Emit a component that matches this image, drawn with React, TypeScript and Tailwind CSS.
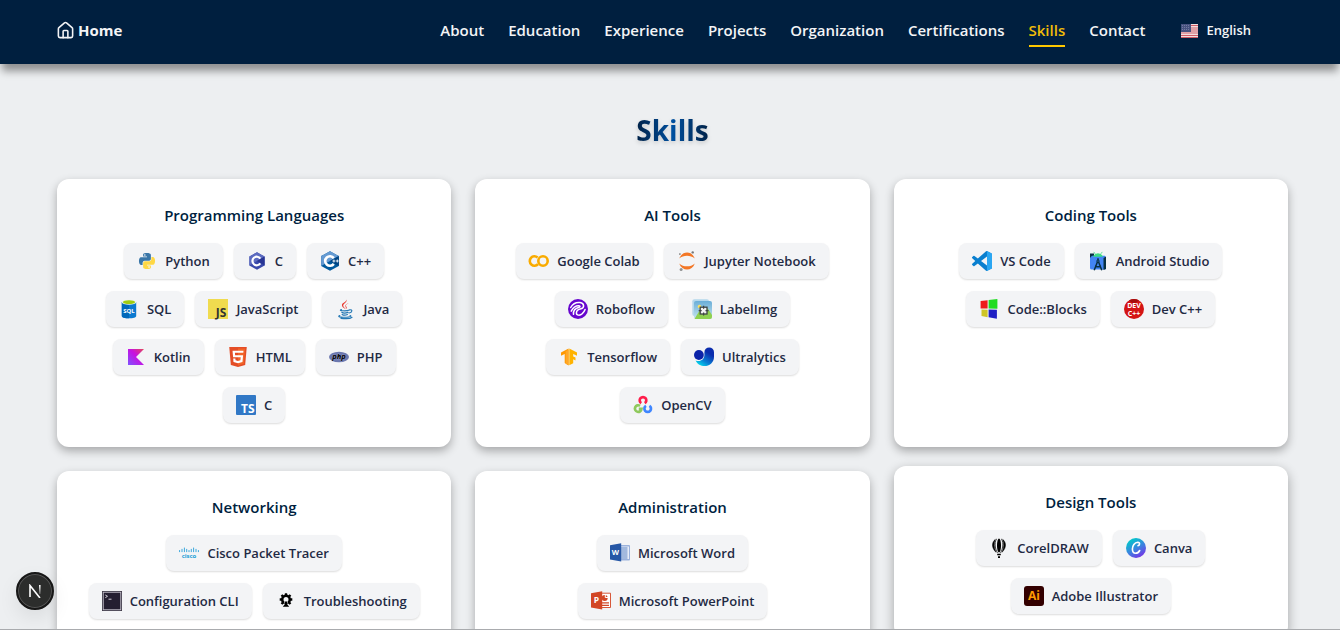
import type { ReactNode } from "react";
import { House } from "lucide-react";

type Skill = { name: string; icon: ReactNode };
type Category = { title: string; skills: Skill[]; lifted?: boolean };

function Icon({ box = "0 0 20 20", children }: { box?: string; children: ReactNode }) {
  return (
    <svg aria-hidden="true" viewBox={box} className="size-5 shrink-0 overflow-visible font-['Open_Sans',sans-serif]">
      {children}
    </svg>
  );
}

const python = (
  <Icon box="-3 -3 30 30">
    <path
      fill="#3a76a8"
      d="M14.25.18l.9.2.73.26.59.3.45.32.34.34.25.34.16.33.1.3.04.26.02.2-.01.13V8.5l-.05.63-.13.55-.21.46-.26.38-.3.31-.33.25-.35.19-.35.14-.33.1-.3.07-.26.04-.21.02H8.77l-.69.05-.59.14-.5.22-.41.27-.33.32-.27.35-.2.36-.15.37-.1.35-.07.32-.04.27-.02.21v3.06H3.17l-.21-.03-.28-.07-.32-.12-.35-.18-.36-.26-.36-.36-.35-.46-.32-.59-.28-.73-.21-.88-.14-1.05-.05-1.23.06-1.22.16-1.04.24-.87.32-.71.36-.57.4-.44.42-.33.42-.24.4-.16.36-.1.32-.05.24-.01h.16l.06.01h8.16v-.83H6.18l-.01-2.75-.02-.37.05-.34.11-.31.17-.28.25-.26.31-.23.38-.2.44-.18.51-.15.58-.12.64-.1.71-.06.77-.04.84-.02 1.27.05z"
    />
    <path
      fill="#ffd845"
      d="M21.04 6.11l.28.06.32.12.35.18.36.27.36.35.35.47.32.59.28.73.21.88.14 1.04.05 1.23-.06 1.23-.16 1.04-.24.86-.32.71-.36.57-.4.45-.42.33-.42.24-.4.16-.36.09-.32.05-.24.02-.16-.01h-8.22v.82h5.84l.01 2.76.02.36-.05.34-.11.31-.17.29-.25.25-.31.24-.38.2-.44.17-.51.15-.58.13-.64.09-.71.07-.77.04-.84.01-1.27-.04-1.07-.14-.9-.2-.73-.25-.59-.3-.45-.33-.34-.34-.25-.34-.16-.33-.1-.3-.04-.25-.02-.2.01-.13v-5.34l.05-.64.13-.54.21-.46.26-.38.3-.32.33-.24.35-.2.35-.14.33-.1.3-.06.26-.04.21-.02.13-.01h5.84l.69-.05.59-.14.5-.21.41-.28.33-.32.27-.35.2-.36.15-.36.1-.35.07-.32.04-.28.02-.21V6.07h2.09l.14.01z"
    />
    <circle cx="8.8" cy="3" r="1.2" fill="#fff" />
    <circle cx="15.1" cy="21" r="1.2" fill="#fff" />
  </Icon>
);

const cLang = (
  <Icon>
    <path d="M10 1.2 17.6 5.6v8.8L10 18.8 2.4 14.4V5.6z" fill="#3949ab" />
    <path d="M10 1.2 17.6 5.6 2.4 14.4V5.6z" fill="#5c6bc0" />
    <path d="M17.6 5.6v8.8L10 10z" fill="#283593" />
    <path d="M13.3 7.6a4.3 4.3 0 1 0 0 4.8" fill="none" stroke="#fff" strokeWidth="2.2" />
  </Icon>
);

const cpp = (
  <Icon>
    <path d="M10 .2 18.8 5.1v9.8L10 19.8 1.2 14.9V5.1z" fill="#00599c" />
    <path d="M10 .2 18.8 5.1 1.2 14.9V5.1z" fill="#659ad2" />
    <path d="M18.8 5.1v9.8L10 10z" fill="#004482" />
    <path d="M13.8 7.1a4.8 4.8 0 1 0 0 5.8" fill="none" stroke="#fff" strokeWidth="2.6" />
    <path d="M12.4 10h3M13.9 8.5v3M15.9 10h2.8M17.3 8.5v3" stroke="#fff" strokeWidth=".9" />
  </Icon>
);

const sql = (
  <Icon>
    <path d="M2.8 3v14c0 1.5 3.2 2.3 7.2 2.3s7.2-.8 7.2-2.3V3z" fill="#0a79d0" />
    <path d="M2.8 3v14c0 1.5 3.2 2.3 7.2 2.3V3z" fill="#0068ba" />
    <ellipse cx="10" cy="3.2" rx="7.2" ry="2.5" fill="#eef6e4" />
    <ellipse cx="10" cy="3.2" rx="6" ry="1.9" fill="#9fcc10" />
    <text x="10" y="13.6" textAnchor="middle" fontSize="6" fontWeight="700" fill="#fff">SQL</text>
  </Icon>
);

const javascript = (
  <Icon>
    <rect width="20" height="20" fill="#f0db4f" />
    <text x="18.4" y="17.6" textAnchor="end" fontSize="12" fontWeight="700" fill="#323330">JS</text>
  </Icon>
);

const java = (
  <Icon>
    <path d="M11.3.5c1.5 3-3.8 4.2-3 6.6.3 1 1.5 1.8 2.1 2.9-2.2-1.3-4-2.7-3.4-4.6C7.7 3.5 11.5 3 11.3.5z" fill="#e8382f" />
    <path d="M13.7 4c-2 1-4 2-3.2 3.7.5 1 1 1.6-.1 2.5 3-1.6.2-2.7.5-3.8.2-.9 1.5-1.5 2.8-2.4z" fill="#e8382f" />
    <g fill="none" stroke="#2579b5" strokeWidth="1.2" strokeLinecap="round">
      <path d="M6.4 10.6c-4 1.4 5.5 1.6 8 .4M14.8 10.8c3-.6 2.6 2.8-.7 3.2M6.8 13.3c1.2.9 4.4.8 6.2.1M7.2 15.4c1.2.8 3.8.7 5.2.1" />
      <path d="M4.8 16.6c-4 1.4 4.5 2 8.6 1.4 3-.4 2.8-1.1 1.7-1.5M6 19.3c4 .5 9.5.4 11-1" />
    </g>
  </Icon>
);

const kotlin = (
  <Icon>
    <defs>
      <linearGradient id="kotlin" x1="1" y1="0" x2="0" y2="1">
        <stop offset="0" stopColor="#e44857" />
        <stop offset=".45" stopColor="#c711e1" />
        <stop offset="1" stopColor="#7f52ff" />
      </linearGradient>
    </defs>
    <path d="M2 2h16l-8 8 8 8H2z" fill="url(#kotlin)" />
  </Icon>
);

const html = (
  <Icon box="0 0 24 24">
    <path d="M1.5 0h21l-1.91 21.563L11.977 24l-8.564-2.438L1.5 0z" fill="#e44d26" />
    <path d="M12 1.8h8.6L19 20.2l-7 2z" fill="#f16529" />
    <path
      fill="#fff"
      d="M8.531 9.75l-.232-2.718 10.059.003.23-2.622L5.412 4.41l.698 8.01h9.126l-.326 3.426-2.91.804-2.955-.81-.188-2.11H6.248l.33 4.171L12 19.351l5.379-1.443.744-8.157H8.531z"
    />
  </Icon>
);

const php = (
  <Icon>
    <ellipse cx="10" cy="10" rx="10" ry="5.3" fill="#6c78af" />
    <text x="10" y="12" textAnchor="middle" fontSize="7.5" fontWeight="700" fontStyle="italic" fill="#000" stroke="#b3b9d8" strokeWidth=".4" paintOrder="stroke">php</text>
  </Icon>
);

const typescript = (
  <Icon>
    <rect width="20" height="20" rx="1" fill="#3178c6" />
    <text x="18.6" y="17.6" textAnchor="end" fontSize="12" fontWeight="700" fill="#fff">TS</text>
  </Icon>
);

const colab = (
  <Icon>
    <g fill="none" stroke="#f9ab00" strokeWidth="2.6">
      <path d="M8.6 6.5a4.7 4.7 0 1 0 .4 6.6" />
      <circle cx="14" cy="10" r="4.7" />
    </g>
  </Icon>
);

const jupyter = (
  <Icon>
    <path d="M2.2 7.6c3-8 12.8-8 15.6 0-4.3-3.8-11.3-3.8-15.6 0zM2.2 12.4c3 8 12.8 8 15.6 0-4.3 3.8-11.3 3.8-15.6 0z" fill="#f37726" />
    <circle cx="15.7" cy="1.4" r="1.2" fill="#767677" />
    <circle cx="4.1" cy="18.4" r="1.5" fill="#929293" />
    <circle cx="2.9" cy="3.1" r=".8" fill="#616262" />
  </Icon>
);

const roboflow = (
  <Icon>
    <circle cx="10" cy="10" r="10" fill="#6706ce" />
    <g fill="none" stroke="#fff" strokeWidth="1.5" strokeLinecap="round">
      <path d="M2.7 8.5C5 4.5 8.500 3.200 12 3.600c4.600.6 4.600 5.400 1 6.200-2.600.6-4.600 2-4.600 4.200 0 2.600 3.600 2.800 5.800.8 1.200-1.100 2.200-2.500 2.900-4.300" />
      <path d="M3.200 12.200c1.800-3.400 4.500-5.600 7.700-5.400 1.500.2 1.400 1.200.2 1.500-3.600.9-6 3.200-5.600 7" />
    </g>
  </Icon>
);

const labelImg = (
  <Icon>
    <defs>
      <linearGradient id="sky" x1="0" y1="0" x2="0" y2="1">
        <stop offset="0" stopColor="#6aaed8" />
        <stop offset="1" stopColor="#c5e4ee" />
      </linearGradient>
    </defs>
    <rect x=".3" y=".3" width="16.7" height="16.7" rx="2" fill="#b5d8ec" />
    <rect x="2" y="2" width="18" height="18" rx="2" fill="url(#sky)" />
    <path d="M2.5 20 8.500 10l4 4 3-5 4.500 7v2a2 2 0 0 1-2 2z" fill="#8fd14f" />
    <circle cx="7.5" cy="7.5" r="1.7" fill="#ffe45c" />
    <rect x="8.2" y="8.2" width="6.8" height="6.8" fill="#f3f3f3" stroke="#3f4444" strokeWidth="1.3" />
    <path d="M11.6 6.7v3M11.6 13.5v3M6.7 11.6h3M13.5 11.6h3" stroke="#3f4444" strokeWidth="1.2" />
  </Icon>
);

const tensorflow = (
  <Icon>
    <path d="M9.6 1.5 2 5.5v3.3l3.7-1.9v9.2l3.9 2.3z" fill="#ff9800" />
    <path d="M6.7 4.3 9.6 2.7v15.6l-2.9-1.6z" fill="#ffa726" />
    <path d="M10.3 1.5 18 5.5v3.3l-3.8-1.9v2.5l2.3 1.2v2.9l-2.3-1.2v3.9l-3.9 2z" fill="#ffb300" />
  </Icon>
);

const ultralytics = (
  <Icon>
    <defs>
      <linearGradient id="ultra" x1=".8" y1=".1" x2=".2" y2="1">
        <stop offset=".2" stopColor="#0a2cad" />
        <stop offset=".65" stopColor="#087fd5" />
        <stop offset="1" stopColor="#05e0ed" />
      </linearGradient>
    </defs>
    <circle cx="4.9" cy="8" r="4.9" fill="#0b23a9" />
    <path d="M10.4 5.2a4.8 4.8 0 0 1 9.6 0v4.5c0 10.6-14.4 12.6-18.4 3.7 4.2 1.7 8.8-.4 8.8-5.4z" fill="url(#ultra)" />
  </Icon>
);

const opencv = (
  <Icon>
    <g fill="none" strokeWidth="2.7">
      <path d="M8.3 8.2a3.3 3.3 0 1 1 3.4 0" stroke="#ff1e4b" />
      <path d="M7 10.8a3.3 3.3 0 1 0 1.5 3.1H5.8" stroke="#8fc95d" />
      <path d="M13 10.8a3.3 3.3 0 1 0 3.4 0" stroke="#3f86ff" />
    </g>
  </Icon>
);

const vscode = (
  <Icon box="0 0 24 24">
    <path
      fill="#0a7fcf"
      fillRule="evenodd"
      d="M23.15 2.587L18.21.21a1.494 1.494 0 0 0-1.705.29l-9.46 8.63-4.12-3.128a.999.999 0 0 0-1.276.057L.327 7.261A1 1 0 0 0 .326 8.74L3.899 12 .326 15.26a1 1 0 0 0 .001 1.479L1.65 17.94a.999.999 0 0 0 1.276.057l4.12-3.128 9.46 8.63a1.492 1.492 0 0 0 1.704.29l4.942-2.377A1.5 1.5 0 0 0 24 20.06V3.939a1.5 1.5 0 0 0-.85-1.352zm-5.146 14.861L10.826 12l7.178-5.448v10.896z"
    />
    <path d="M18 .1 23.15 2.587A1.5 1.5 0 0 1 24 3.939V20.06a1.5 1.5 0 0 1-.85 1.352L18 23.9z" fill="#2aa6f2" />
  </Icon>
);

const androidStudio = (
  <Icon>
    <path d="M2 2.5h4v5H2z" fill="#073042" />
    <path d="M2 6.8 4 4.8h13l1 2V17a1.5 1.5 0 0 1-1.5 1.5h-13A1.5 1.5 0 0 1 2 17z" fill="#4285f4" />
    <path d="m15.5 7 2.5-1.5V18l-2.500 1z" fill="#073042" />
    <path d="M5 5.8a5.3 5.3 0 0 1 10 0z" fill="#3ddc84" />
    <path d="m5.7.9 1.5 2M14.3.9l-1.5 2" stroke="#3ddc84" strokeWidth=".8" />
    <path d="M10 7.2v2M9.6 10.5 6.2 19.3M10.4 10.5l3.4 8.8M7 15c2 1 4 1 6 0" fill="none" stroke="#073042" strokeWidth="1.5" />
    <circle cx="10" cy="10" r="1.6" fill="#073042" />
    <circle cx="10" cy="10" r=".6" fill="#4285f4" />
  </Icon>
);

const codeBlocks = (
  <Icon>
    <path d="m1.6 2 7-.8v8.4l-7-.2z" fill="#ee1c1c" />
    <path d="m9.6 1.1 8.8-1v9.6l-8.8-.1z" fill="#22dc22" />
    <path d="m2.5 10.5 6.1.2v7.6l-6.1-1.2z" fill="#cfc528" />
    <path d="m9.6 10.6 8.3.2v9l-8.300-1.500z" fill="#2020c4" />
  </Icon>
);

const devCpp = (
  <Icon>
    <circle cx="10" cy="10" r="10" fill="#d41414" />
    <path d="M5 1.4a10 10 0 0 1 10 0L10 5z" fill="#a50c0c" />
    <text x="10" y="9.3" textAnchor="middle" fontSize="7" fontWeight="700" fill="#fff">DEV</text>
    <text x="10" y="16.7" textAnchor="middle" fontSize="7" fontWeight="700" fill="#fff">C++</text>
  </Icon>
);

const cisco = (
  <Icon>
    <path
      d="M.6 7.5v1.2M3 6.3v2.4M5.4 5v3.7M7.7 6.3v2.4M10 7.5v1.2M12.3 6.3v2.4M14.6 5v3.7M17 6.3v2.4M19.4 7.5v1.2"
      stroke="#3ba7dc"
      strokeWidth="1"
      strokeLinecap="round"
    />
    <text x="10" y="15" textAnchor="middle" fontSize="6" fontWeight="700" fill="#1ba0d7">cisco</text>
  </Icon>
);

const terminal = (
  <Icon>
    <rect x=".4" y=".4" width="19.2" height="19.2" fill="#241f31" stroke="#3d3846" strokeWidth=".8" />
    <rect x="1.3" y="1.3" width="17.4" height="17.4" fill="none" stroke="#c4bfca" strokeWidth=".8" />
    <path d="m3.3 4 2.2 1.3-2.2 1.4M6.5 8.2h3" fill="none" stroke="#e6e3ea" strokeWidth=".9" />
  </Icon>
);

const troubleshooting = (
  <Icon>
    <circle cx="10" cy="8.5" r="3.8" fill="none" stroke="#000" strokeWidth="2.6" />
    <path
      d="M10 2.2v2M3.7 8.5h2M14.3 8.5h2M5.5 4l1.4 1.4M14.5 4l-1.4 1.4M5.5 13l1.4-1.4M14.5 13l-1.4-1.4"
      stroke="#000"
      strokeWidth="2.3"
    />
    <path d="M8 10.5h4l-.7 2.5 2 2.5H6.7l2-2.5z" fill="#f3f4f6" />
    <path d="M8.8 10.5h2.4v2.8l2 2.4H6.8l2-2.4z" fill="#000" />
  </Icon>
);

const word = (
  <Icon>
    <path d="M10 2h9a1 1 0 0 1 1 1v13.5a1 1 0 0 1-1 1h-9z" fill="#9bb2dc" />
    <path d="M11 3.5h8v12.5h-8z" fill="#e8eef9" />
    <path d="M11 5h6.5M11 7h6.5M11 9h6.5M11 11h6.5M11 13h6.5M11 15h6.5" stroke="#5d83c4" strokeWidth="1.1" />
    <path d="M0 2.2 11.2.3v18.2L0 16.600z" fill="#2657a6" />
    <text x="5.4" y="12" textAnchor="middle" fontSize="7.5" fontWeight="700" fill="#fff">W</text>
  </Icon>
);

const powerpoint = (
  <Icon>
    <path d="M10 2.2h9.5v14.3H10z" fill="#fff" stroke="#d24625" strokeWidth=".9" />
    <circle cx="13.7" cy="7" r="3" fill="#d24625" />
    <path d="M14.3 3v3.5h3.5" fill="none" stroke="#fff" strokeWidth="1" />
    <path d="M11 11.8h7M11 14.3h7" stroke="#d24625" strokeWidth="1.2" />
    <path d="M0 2.2 11.2.3v18.2L0 16.600z" fill="#d24625" />
    <text x="5.4" y="12.3" textAnchor="middle" fontSize="8.5" fontWeight="700" fill="#fff">P</text>
  </Icon>
);

const corel = (
  <Icon>
    <ellipse cx="10" cy="7.5" rx="2" ry="7" fill="#000" />
    <path d="M8 .8C5.5 2 5.5 11 8.6 14.8M12 .8c2.5 1.2 2.5 10.2-.6 14" fill="none" stroke="#000" strokeWidth=".7" />
    <path d="M6.3 1.4C2.7 4 2.2 9.5 7 14.3 5 10 4.7 5 6.3 1.4zM13.7 1.4c3.6 2.6 4.1 8.1-.7 12.9 2-4.3 2.3-9.3.7-12.9z" fill="#000" stroke="#000" strokeWidth=".5" />
    <path d="M8.2 15.8h3.6v1.5H8.2zM9 18.2h2V20H9z" fill="#000" />
  </Icon>
);

const canva = (
  <Icon>
    <defs>
      <linearGradient id="canva" x1=".2" y1="0" x2=".8" y2="1">
        <stop offset=".1" stopColor="#05c3cc" />
        <stop offset=".55" stopColor="#3e7fe0" />
        <stop offset="1" stopColor="#7d2ae8" />
      </linearGradient>
    </defs>
    <circle cx="10" cy="10" r="10" fill="url(#canva)" />
    <path d="M12 7.7c1.8-.2 2.4-3.4-.2-3.5C8.5 4.2 6.4 8 6.4 11c0 2.6 1.2 4.3 3.2 4.3 1.8 0 3.2-1.2 4.1-2.8" fill="none" stroke="#fff" strokeWidth="1.6" strokeLinecap="round" />
  </Icon>
);

const illustrator = (
  <Icon>
    <rect width="20" height="20" rx="3" fill="#330000" />
    <text x="10" y="14.2" textAnchor="middle" fontSize="12" fontWeight="700" fill="#ff9a00">Ai</text>
  </Icon>
);

const categories: Category[] = [
  {
    title: "Programming Languages",
    skills: [
      { name: "Python", icon: python },
      { name: "C", icon: cLang },
      { name: "C++", icon: cpp },
      { name: "SQL", icon: sql },
      { name: "JavaScript", icon: javascript },
      { name: "Java", icon: java },
      { name: "Kotlin", icon: kotlin },
      { name: "HTML", icon: html },
      { name: "PHP", icon: php },
      { name: "C", icon: typescript },
    ],
  },
  {
    title: "AI Tools",
    skills: [
      { name: "Google Colab", icon: colab },
      { name: "Jupyter Notebook", icon: jupyter },
      { name: "Roboflow", icon: roboflow },
      { name: "LabelImg", icon: labelImg },
      { name: "Tensorflow", icon: tensorflow },
      { name: "Ultralytics", icon: ultralytics },
      { name: "OpenCV", icon: opencv },
    ],
  },
  {
    title: "Coding Tools",
    skills: [
      { name: "VS Code", icon: vscode },
      { name: "Android Studio", icon: androidStudio },
      { name: "Code::Blocks", icon: codeBlocks },
      { name: "Dev C++", icon: devCpp },
    ],
  },
  {
    title: "Networking",
    skills: [
      { name: "Cisco Packet Tracer", icon: cisco },
      { name: "Configuration CLI", icon: terminal },
      { name: "Troubleshooting", icon: troubleshooting },
    ],
  },
  {
    title: "Administration",
    skills: [
      { name: "Microsoft Word", icon: word },
      { name: "Microsoft PowerPoint", icon: powerpoint },
    ],
  },
  {
    title: "Design Tools",
    lifted: true,
    skills: [
      { name: "CorelDRAW", icon: corel },
      { name: "Canva", icon: canva },
      { name: "Adobe Illustrator", icon: illustrator },
    ],
  },
];

const links = ["About", "Education", "Experience", "Projects", "Organization", "Certifications", "Skills", "Contact"];

function Flag() {
  return (
    <svg aria-hidden="true" viewBox="0 0 17 14" className="h-3.5 w-[17px] shrink-0">
      <rect width="17" height="14" fill="#e0a0a6" />
      <path d="M0 .5h17M0 2.5h17M0 10.5h17M0 12.5h17" stroke="#f3dede" strokeWidth="1" />
      <path d="M0 1.5h17M0 11.5h17M0 13.5h17" stroke="#cf5b66" strokeWidth="1" />
      <rect width="10" height="8" fill="#46517f" />
      <path d="M1 1.5h8M1 3.5h8M1 5.5h8" stroke="#7d86a8" strokeWidth=".8" strokeDasharray="1 1" />
    </svg>
  );
}

function Header() {
  return (
    <header className="relative z-10 flex h-16 shrink-0 items-center justify-between bg-[#001f3f] pr-[53px] pb-1 pl-14 text-[15px] font-semibold text-gray-100 shadow-[0_9px_8px_-2px_rgba(0,0,0,0.4)]">
      <a href="#home" className="flex items-center gap-[3px] font-bold">
        <House size={19} strokeWidth={2} aria-hidden="true" />
        Home
      </a>
      <div className="flex items-center">
        <nav className="flex items-center gap-6 pt-0.5">
          {links.map((label) => (
            <a
              key={label}
              href={`#${label.toLowerCase()}`}
              className={
                label === "Skills"
                  ? "border-b-2 border-[#ffc800] pt-1 pb-[3px] text-[#f0bc08]"
                  : "border-b-2 border-transparent pt-1 pb-[3px]"
              }
            >
              {label}
            </a>
          ))}
        </nav>
        <button type="button" className="flex items-center gap-2 px-9 pt-0.5 text-[13px] font-semibold">
          <Flag />
          English
        </button>
      </div>
    </header>
  );
}

function Card({ title, skills, lifted }: Category) {
  return (
    <section
      className={
        lifted
          ? "-translate-y-[5px] rounded-xl bg-white p-6 shadow-[0_4px_12px_rgba(0,0,0,0.32)]"
          : "rounded-xl bg-white p-6 shadow-[0_4px_10px_rgba(0,0,0,0.3)]"
      }
    >
      <h3 className="mb-4 text-center text-[15px] leading-6 font-semibold text-[#001f3f]">{title}</h3>
      <ul className="flex flex-wrap justify-center gap-x-[11px] gap-y-3">
        {skills.map(({ name, icon }, i) => (
          <li
            key={i}
            className="flex h-9 items-center gap-2 rounded-lg bg-gray-100 px-[13px] text-[13px] leading-[21px] font-semibold text-[#1f2a44] shadow-[0_1px_2px_rgba(0,0,0,0.14)]"
          >
            {icon}
            {name}
          </li>
        ))}
      </ul>
    </section>
  );
}

export default function App() {
  return (
    <div className="flex h-screen flex-col border-b border-[#a9abae] bg-[#edeff1] font-['Open_Sans','Noto_Sans',sans-serif]">
      <Header />
      <main className="min-h-0 flex-1 overflow-y-auto pt-12 pr-[52px] pb-12 pl-[57px] [scrollbar-width:none]">
        <div className="flex justify-center">
          <h2 className="bg-gradient-to-r from-[#002147] via-[#0050a0] to-[#002147] bg-clip-text text-[28px] leading-9 font-bold text-transparent drop-shadow-[0_2px_2px_rgba(0,0,0,0.15)]">
            Skills
          </h2>
        </div>
        <div className="mt-[31px] grid grid-cols-1 gap-6 sm:grid-cols-2 lg:grid-cols-3">
          {categories.map((category) => (
            <Card key={category.title} {...category} />
          ))}
        </div>
      </main>
      <button
        type="button"
        aria-label="Open developer tools"
        className="fixed bottom-5 left-4 z-20 flex size-[38px] items-center justify-center rounded-full border-2 border-[#171717] bg-[#2c2d2c] shadow-[0_8px_20px_rgba(0,0,0,0.08)] ring-1 ring-[#555] ring-inset"
      >
        <svg aria-hidden="true" viewBox="0 0 14 14" className="size-3.5" fill="none">
          <defs>
            <linearGradient id="stem" x1="0" y1="0" x2="0" y2="1">
              <stop offset="0" stopColor="#fff" />
              <stop offset="1" stopColor="#fff" stopOpacity=".2" />
            </linearGradient>
          </defs>
          <path d="M2 13V1.5L12 14" stroke="#fff" strokeWidth="1.6" />
          <path d="M11 1h1.6v9H11z" fill="url(#stem)" />
        </svg>
      </button>
    </div>
  );
}
